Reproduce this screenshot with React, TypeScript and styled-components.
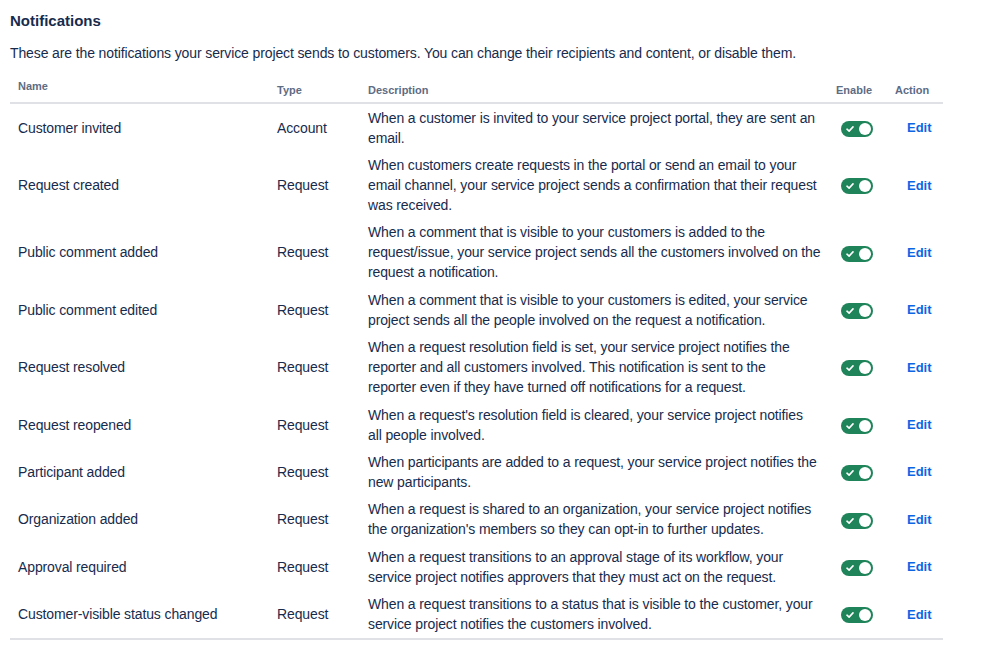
import styled, { createGlobalStyle } from "styled-components";

const GlobalStyle = createGlobalStyle`
    body {
        margin: 0;
        background: #ffffff;
        font-family: "Liberation Sans", Arial, sans-serif;
        color: #172b4d;
    }
`;

const Page = styled.div`
    padding: 11px 10px 0 10px;
    width: 933px;
`;

const Title = styled.h2`
    margin: 0;
    font-size: 15px;
    line-height: 20px;
    font-weight: 700;
    color: #172b4d;
`;

const Intro = styled.p`
    margin: 12px 0 0 0;
    font-size: 14px;
    line-height: 20px;
    letter-spacing: -0.12px;
    color: #172b4d;
`;

const Table = styled.table`
    margin-top: 8px;
    width: 933px;
    border-collapse: collapse;
    table-layout: fixed;
    border-bottom: 2px solid #dfe1e6;
`;

const HeadRow = styled.tr`
    border-bottom: 2px solid #dfe1e6;
`;

const HeadCell = styled.th<{ raised?: boolean }>`
    text-align: left;
    vertical-align: bottom;
    padding: 7px 8px ${(p) => (p.raised ? "8px" : "4px")} 8px;
    font-size: 11px;
    line-height: 16px;
    font-weight: 700;
    color: #5e6c84;
`;

const Cell = styled.td<{ center?: boolean; indent?: number }>`
    vertical-align: middle;
    padding: 3.7px ${(p) => (p.center ? "10px" : "6px")} 3.7px ${(p) => (p.indent ? `${p.indent}px` : "8px")};
    font-size: 14px;
    line-height: 20px;
    letter-spacing: -0.12px;
    color: #172b4d;
    text-align: ${(p) => (p.center ? "center" : "left")};
`;

const Line = styled.span`
    display: block;
    white-space: nowrap;
`;

const Toggle = styled.span<{ on: boolean }>`
    display: inline-flex;
    align-items: center;
    justify-content: space-between;
    box-sizing: border-box;
    width: 32px;
    height: 16px;
    padding: 0 2px 0 5px;
    border-radius: 8px;
    background: ${(p) => (p.on ? "#1f845a" : "#8590a2")};
    vertical-align: middle;
`;

const Knob = styled.span`
    width: 12px;
    height: 12px;
    border-radius: 50%;
    background: #ffffff;
`;

const EditLink = styled.a`
    font-size: 13px;
    font-weight: 700;
    letter-spacing: 0;
    color: #0c66e4;
    text-decoration: none;
    cursor: pointer;
`;

type Notification = {
    name: string;
    type: string;
    description: string[];
};

const notifications: Notification[] = [
    {
        name: "Customer invited",
        type: "Account",
        description: ["When a customer is invited to your service project portal, they are sent an", "email."],
    },
    {
        name: "Request created",
        type: "Request",
        description: [
            "When customers create requests in the portal or send an email to your",
            "email channel, your service project sends a confirmation that their request",
            "was received.",
        ],
    },
    {
        name: "Public comment added",
        type: "Request",
        description: [
            "When a comment that is visible to your customers is added to the",
            "request/issue, your service project sends all the customers involved on the",
            "request a notification.",
        ],
    },
    {
        name: "Public comment edited",
        type: "Request",
        description: [
            "When a comment that is visible to your customers is edited, your service",
            "project sends all the people involved on the request a notification.",
        ],
    },
    {
        name: "Request resolved",
        type: "Request",
        description: [
            "When a request resolution field is set, your service project notifies the",
            "reporter and all customers involved. This notification is sent to the",
            "reporter even if they have turned off notifications for a request.",
        ],
    },
    {
        name: "Request reopened",
        type: "Request",
        description: [
            "When a request's resolution field is cleared, your service project notifies",
            "all people involved.",
        ],
    },
    {
        name: "Participant added",
        type: "Request",
        description: [
            "When participants are added to a request, your service project notifies the",
            "new participants.",
        ],
    },
    {
        name: "Organization added",
        type: "Request",
        description: [
            "When a request is shared to an organization, your service project notifies",
            "the organization's members so they can opt-in to further updates.",
        ],
    },
    {
        name: "Approval required",
        type: "Request",
        description: [
            "When a request transitions to an approval stage of its workflow, your",
            "service project notifies approvers that they must act on the request.",
        ],
    },
    {
        name: "Customer-visible status changed",
        type: "Request",
        description: [
            "When a request transitions to a status that is visible to the customer, your",
            "service project notifies the customers involved.",
        ],
    },
];

const CheckIcon = () => (
    <svg width="8" height="8" viewBox="0 0 8 8" fill="none">
        <path d="M1 4.2 L3.1 6.1 L7 1.9" stroke="#ffffff" strokeWidth="1.6" strokeLinecap="round" strokeLinejoin="round" />
    </svg>
);

const App = () => {
    return (
        <Page>
            <GlobalStyle />
            <Title>Notifications</Title>
            <Intro>
                These are the notifications your service project sends to customers. You can change their recipients and
                content, or disable them.
            </Intro>
            <Table>
                <colgroup>
                    <col style={{ width: 259 }} />
                    <col style={{ width: 91 }} />
                    <col style={{ width: 468 }} />
                    <col style={{ width: 59 }} />
                    <col style={{ width: 56 }} />
                </colgroup>
                <thead>
                    <HeadRow>
                        <HeadCell raised>Name</HeadCell>
                        <HeadCell>Type</HeadCell>
                        <HeadCell>Description</HeadCell>
                        <HeadCell>Enable</HeadCell>
                        <HeadCell>Action</HeadCell>
                    </HeadRow>
                </thead>
                <tbody>
                    {notifications.map((n) => (
                        <tr key={n.name}>
                            <Cell>{n.name}</Cell>
                            <Cell>{n.type}</Cell>
                            <Cell>
                                {n.description.map((line) => (
                                    <Line key={line}>{line}</Line>
                                ))}
                            </Cell>
                            <Cell center>
                                <Toggle on={true}>
                                    <CheckIcon />
                                    <Knob />
                                </Toggle>
                            </Cell>
                            <Cell indent={20}>
                                <EditLink>Edit</EditLink>
                            </Cell>
                        </tr>
                    ))}
                </tbody>
            </Table>
        </Page>
    );
};

export default App;
